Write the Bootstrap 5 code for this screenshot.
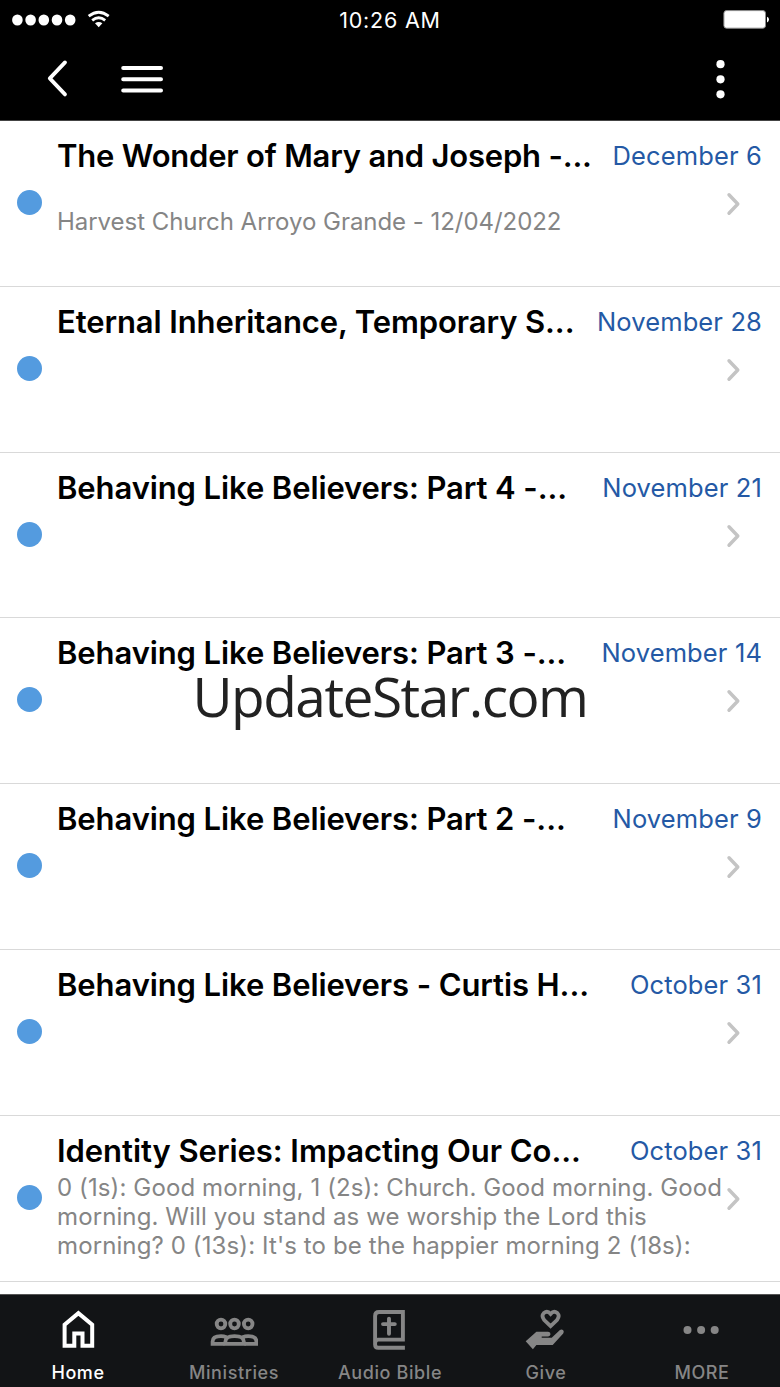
<!DOCTYPE html>
<html lang="en">
<head>
  <meta charset="UTF-8">
  <meta name="viewport" content="width=device-width, initial-scale=1">
  <title>Messages</title>
  <!-- Bootstrap CSS -->
  <link rel="stylesheet" href="https://cdn.jsdelivr.net/npm/bootstrap@5.3.0/dist/css/bootstrap.min.css">
  <style>
    body {
      font-family: Inter, "Liberation Sans", sans-serif;
      background-color: #fff;
      color: #000;
    }
    .app-screen {
      width: 780px;
      height: 1387px;
    }
    svg {
      display: block;
      flex-shrink: 0;
    }
    /* Top bars */
    .status-bar {
      height: 40px;
      padding: 0 11px;
    }
    .status-side {
      width: 110px;
    }
    .status-time {
      font-size: 21.5px;
      letter-spacing: .8px;
    }
    .title-bar {
      height: 81px;
      padding: 0 54px 4px 46px;
      border-bottom: 1px solid #444;
    }
    .menu-icon {
      margin-left: 50px;
    }
    /* Message list */
    .message-list {
      height: 1173px;
    }
    .message {
      height: 165.8px;
      border-bottom: 1px solid #d9d9d9;
    }
    .unread-col {
      width: 57px;
      padding: 69px 0 0 17px;
    }
    .unread-dot {
      width: 25px;
      height: 25px;
      background-color: #549bdf;
    }
    .message-head {
      height: 57px;
      padding: 14px 18px 0 0;
    }
    .message-title {
      font-size: 31px;
      line-height: 42px;
      font-weight: 600;
      letter-spacing: -.1px;
    }
    .message:first-child .message-title {
      letter-spacing: -.2px;
    }
    .message:last-child .message-title {
      letter-spacing: -.05px;
    }
    .message-date {
      font-size: 25.5px;
      line-height: 42px;
      letter-spacing: .13px;
      color: #2459a5;
    }
    .message-text {
      width: 669px;
      font-size: 24px;
      line-height: 29.3px;
      color: #858585;
    }
    .message:first-child .message-text {
      letter-spacing: -.04px;
    }
    .message:last-child .message-text {
      letter-spacing: .11px;
    }
    .message-arrow {
      margin-top: 14px;
    }
    .watermark {
      top: 657px;
      left: 0;
      font-family: "Open Sans", "Noto Sans", sans-serif;
      font-size: 55px;
      line-height: 78px;
      letter-spacing: -1.5px;
      color: #222;
    }
    /* Bottom tabs */
    .tab-bar {
      height: 93px;
      background-color: #121416;
      border-top: 1px solid #555;
      color: #868686;
    }
    .tab-item {
      padding-top: 13px;
      font-size: 18px;
      font-weight: 500;
      line-height: 24px;
      letter-spacing: .6px;
    }
    .tab-item svg {
      margin-bottom: 9px;
    }
    .tab-item.current {
      color: #fff;
    }
  </style>
</head>
<body>
<!-- Shared icon -->
<svg class="d-none">
  <symbol id="arrow" viewBox="0 0 16 24">
    <path d="M3 2.8 L11.8 12 L3 21.2" fill="none" stroke="#c4c4c4" stroke-width="3.4" stroke-linecap="round" stroke-linejoin="round"/>
  </symbol>
</svg>

<div class="app-screen position-relative d-flex flex-column overflow-hidden">

  <!-- HEADER -->
  <header class="bg-black text-white">
    <div class="status-bar d-flex justify-content-between align-items-center">
      <div class="status-side">
        <svg width="110" height="40" viewBox="0 0 110 40">
          <g fill="#fff">
            <ellipse cx="6.4" cy="20" rx="5.3" ry="5.6"/>
            <ellipse cx="19.6" cy="20" rx="5.3" ry="5.6"/>
            <ellipse cx="32.8" cy="20" rx="5.3" ry="5.6"/>
            <ellipse cx="46" cy="20" rx="5.3" ry="5.6"/>
            <ellipse cx="59.2" cy="20" rx="5.3" ry="5.6"/>
            <path d="M84 23.2 Q87.7 20.6 91.4 23.2 L87.7 27.2 Z"/>
          </g>
          <g fill="none" stroke="#fff" stroke-width="2.8">
            <path d="M77.7 16.2 Q87.7 8.2 97.7 16.2"/>
            <path d="M81.2 20.3 Q87.7 15.1 94.2 20.3"/>
          </g>
        </svg>
      </div>
      <span class="status-time">10:26 AM</span>
      <div class="status-side d-flex justify-content-end">
        <svg width="47" height="40" viewBox="0 0 47 40">
          <rect x="1.9" y="10.6" width="41.6" height="17.6" rx="2.6" fill="#fff" stroke="#8c8c8c" stroke-width="1"/>
          <path d="M45 16.8 Q47 17.4 47 19.6 Q47 21.8 45 22.4 Z" fill="#fff"/>
        </svg>
      </div>
    </div>
    <div class="title-bar d-flex align-items-center">
      <svg width="24" height="40" viewBox="0 0 24 40">
        <path d="M19 4.4 L3.8 20.4 L19 36.4" fill="none" stroke="#fff" stroke-width="3.8" stroke-linecap="round" stroke-linejoin="round"/>
      </svg>
      <svg class="menu-icon" width="44" height="40" viewBox="0 0 44 40">
        <path d="M3.2 10H41 M3.2 21.3H41 M3.2 32.6H41" stroke="#fff" stroke-width="4" stroke-linecap="round"/>
      </svg>
      <svg class="ms-auto" width="12" height="42" viewBox="0 0 12 42">
        <g fill="#fff">
          <circle cx="6.5" cy="7.2" r="4.1"/>
          <circle cx="6.5" cy="22.3" r="4.1"/>
          <circle cx="6.5" cy="37.3" r="4.1"/>
        </g>
      </svg>
    </div>
  </header>

  <!-- MESSAGES -->
  <main class="message-list overflow-hidden">
    <div class="message d-flex">
      <div class="unread-col"><div class="unread-dot rounded-circle"></div></div>
      <div class="flex-grow-1">
        <div class="message-head d-flex justify-content-between">
          <span class="message-title">The Wonder of Mary and Joseph -...</span>
          <span class="message-date">December 6</span>
        </div>
        <div class="d-flex">
          <div class="message-text"><br>Harvest Church Arroyo Grande - 12/04/2022</div>
          <svg class="message-arrow" width="16" height="24"><use href="#arrow"/></svg>
        </div>
      </div>
    </div>
    <div class="message d-flex">
      <div class="unread-col"><div class="unread-dot rounded-circle"></div></div>
      <div class="flex-grow-1">
        <div class="message-head d-flex justify-content-between">
          <span class="message-title">Eternal Inheritance, Temporary S...</span>
          <span class="message-date">November 28</span>
        </div>
        <div class="d-flex">
          <div class="message-text"></div>
          <svg class="message-arrow" width="16" height="24"><use href="#arrow"/></svg>
        </div>
      </div>
    </div>
    <div class="message d-flex">
      <div class="unread-col"><div class="unread-dot rounded-circle"></div></div>
      <div class="flex-grow-1">
        <div class="message-head d-flex justify-content-between">
          <span class="message-title">Behaving Like Believers: Part 4 -...</span>
          <span class="message-date">November 21</span>
        </div>
        <div class="d-flex">
          <div class="message-text"></div>
          <svg class="message-arrow" width="16" height="24"><use href="#arrow"/></svg>
        </div>
      </div>
    </div>
    <div class="message d-flex">
      <div class="unread-col"><div class="unread-dot rounded-circle"></div></div>
      <div class="flex-grow-1">
        <div class="message-head d-flex justify-content-between">
          <span class="message-title">Behaving Like Believers: Part 3 -...</span>
          <span class="message-date">November 14</span>
        </div>
        <div class="d-flex">
          <div class="message-text"></div>
          <svg class="message-arrow" width="16" height="24"><use href="#arrow"/></svg>
        </div>
      </div>
    </div>
    <div class="message d-flex">
      <div class="unread-col"><div class="unread-dot rounded-circle"></div></div>
      <div class="flex-grow-1">
        <div class="message-head d-flex justify-content-between">
          <span class="message-title">Behaving Like Believers: Part 2 -...</span>
          <span class="message-date">November 9</span>
        </div>
        <div class="d-flex">
          <div class="message-text"></div>
          <svg class="message-arrow" width="16" height="24"><use href="#arrow"/></svg>
        </div>
      </div>
    </div>
    <div class="message d-flex">
      <div class="unread-col"><div class="unread-dot rounded-circle"></div></div>
      <div class="flex-grow-1">
        <div class="message-head d-flex justify-content-between">
          <span class="message-title">Behaving Like Believers - Curtis H...</span>
          <span class="message-date">October 31</span>
        </div>
        <div class="d-flex">
          <div class="message-text"></div>
          <svg class="message-arrow" width="16" height="24"><use href="#arrow"/></svg>
        </div>
      </div>
    </div>
    <div class="message d-flex">
      <div class="unread-col"><div class="unread-dot rounded-circle"></div></div>
      <div class="flex-grow-1">
        <div class="message-head d-flex justify-content-between">
          <span class="message-title">Identity Series: Impacting Our Co...</span>
          <span class="message-date">October 31</span>
        </div>
        <div class="d-flex">
          <div class="message-text text-nowrap">0 (1s): Good morning, 1 (2s): Church. Good morning. Good<br>morning. Will you stand as we worship the Lord this<br>morning? 0 (13s): It's to be the happier morning 2 (18s):</div>
          <svg class="message-arrow" width="16" height="24"><use href="#arrow"/></svg>
        </div>
      </div>
    </div>
  </main>

  <div class="watermark position-absolute w-100 text-center">UpdateStar.com</div>

  <!-- TABS -->
  <nav class="tab-bar d-flex text-center">
    <div class="tab-item current col d-flex flex-column align-items-center">
      <svg width="48" height="44" viewBox="0 0 48 44">
        <path d="M10.6 37.7V16.8L24.4 5.2L38.2 16.8V37.7H28.5V25.5H20.3V37.7Z" fill="none" stroke="#fff" stroke-width="4"/>
      </svg>
      Home
    </div>
    <div class="tab-item col d-flex flex-column align-items-center">
      <svg width="48" height="44" viewBox="0 0 48 44">
        <g fill="none" stroke="currentColor" stroke-width="3.8">
          <circle cx="11" cy="16" r="4.3"/>
          <circle cx="24.5" cy="16" r="4.3"/>
          <circle cx="38.2" cy="16" r="4.3"/>
          <path d="M14.4 35.9H2.6V33.5Q2.6 28.2 11 28.2Q14 28.2 16.5 29.2"/>
          <path d="M34.5 35.9H46.4V33.5Q46.4 28.2 38.2 28.2Q35 28.2 32.5 29.2"/>
          <path d="M15.4 35.9V33.5Q15.4 28.2 24.5 28.2Q33.8 28.2 33.8 33.5V35.9Z"/>
        </g>
      </svg>
      Ministries
    </div>
    <div class="tab-item col d-flex flex-column align-items-center">
      <svg width="48" height="44" viewBox="0 0 48 44">
        <g fill="none" stroke="currentColor" stroke-width="3.9">
          <path d="M38.9 39.8H12.2Q9.1 39.8 9.1 36.5V8Q9.1 4 13.1 4H36.9V31.6H12.2Q9.1 31.6 9.1 35.6"/>
          <path d="M23 10.6V25.8M17 16.1H28.8" stroke-linecap="round"/>
        </g>
      </svg>
      Audio Bible
    </div>
    <div class="tab-item col d-flex flex-column align-items-center">
      <svg width="48" height="44" viewBox="0 0 48 44">
        <path d="M28.6 18.2L22.2 12Q19 8 21.9 5Q25.4 2.2 28.6 5.9Q31.8 2.2 35.3 5Q38.2 8 35 12Z" fill="none" stroke="currentColor" stroke-width="3.8"/>
        <path d="M3.7 33.3L14.4 23.7H26.2Q28.7 24 28.5 26.3Q28.2 28.2 26.2 28.4H19.7V29.8H29.7L37.9 22Q39.7 20.8 41.2 22.2Q42.4 23.8 41.2 25.4L30.7 37H14.4L10.9 41.2Z" fill="currentColor"/>
      </svg>
      Give
    </div>
    <div class="tab-item col d-flex flex-column align-items-center">
      <svg width="48" height="44" viewBox="0 0 48 44">
        <g fill="currentColor">
          <circle cx="9.5" cy="22" r="4"/>
          <circle cx="23.1" cy="22" r="4"/>
          <circle cx="36.7" cy="22" r="4"/>
        </g>
      </svg>
      MORE
    </div>
  </nav>
</div>

<!-- Bootstrap Bundle JS (with Popper) -->
<script src="https://cdn.jsdelivr.net/npm/bootstrap@5.3.0/dist/js/bootstrap.bundle.min.js"></script>
</body>
</html>
